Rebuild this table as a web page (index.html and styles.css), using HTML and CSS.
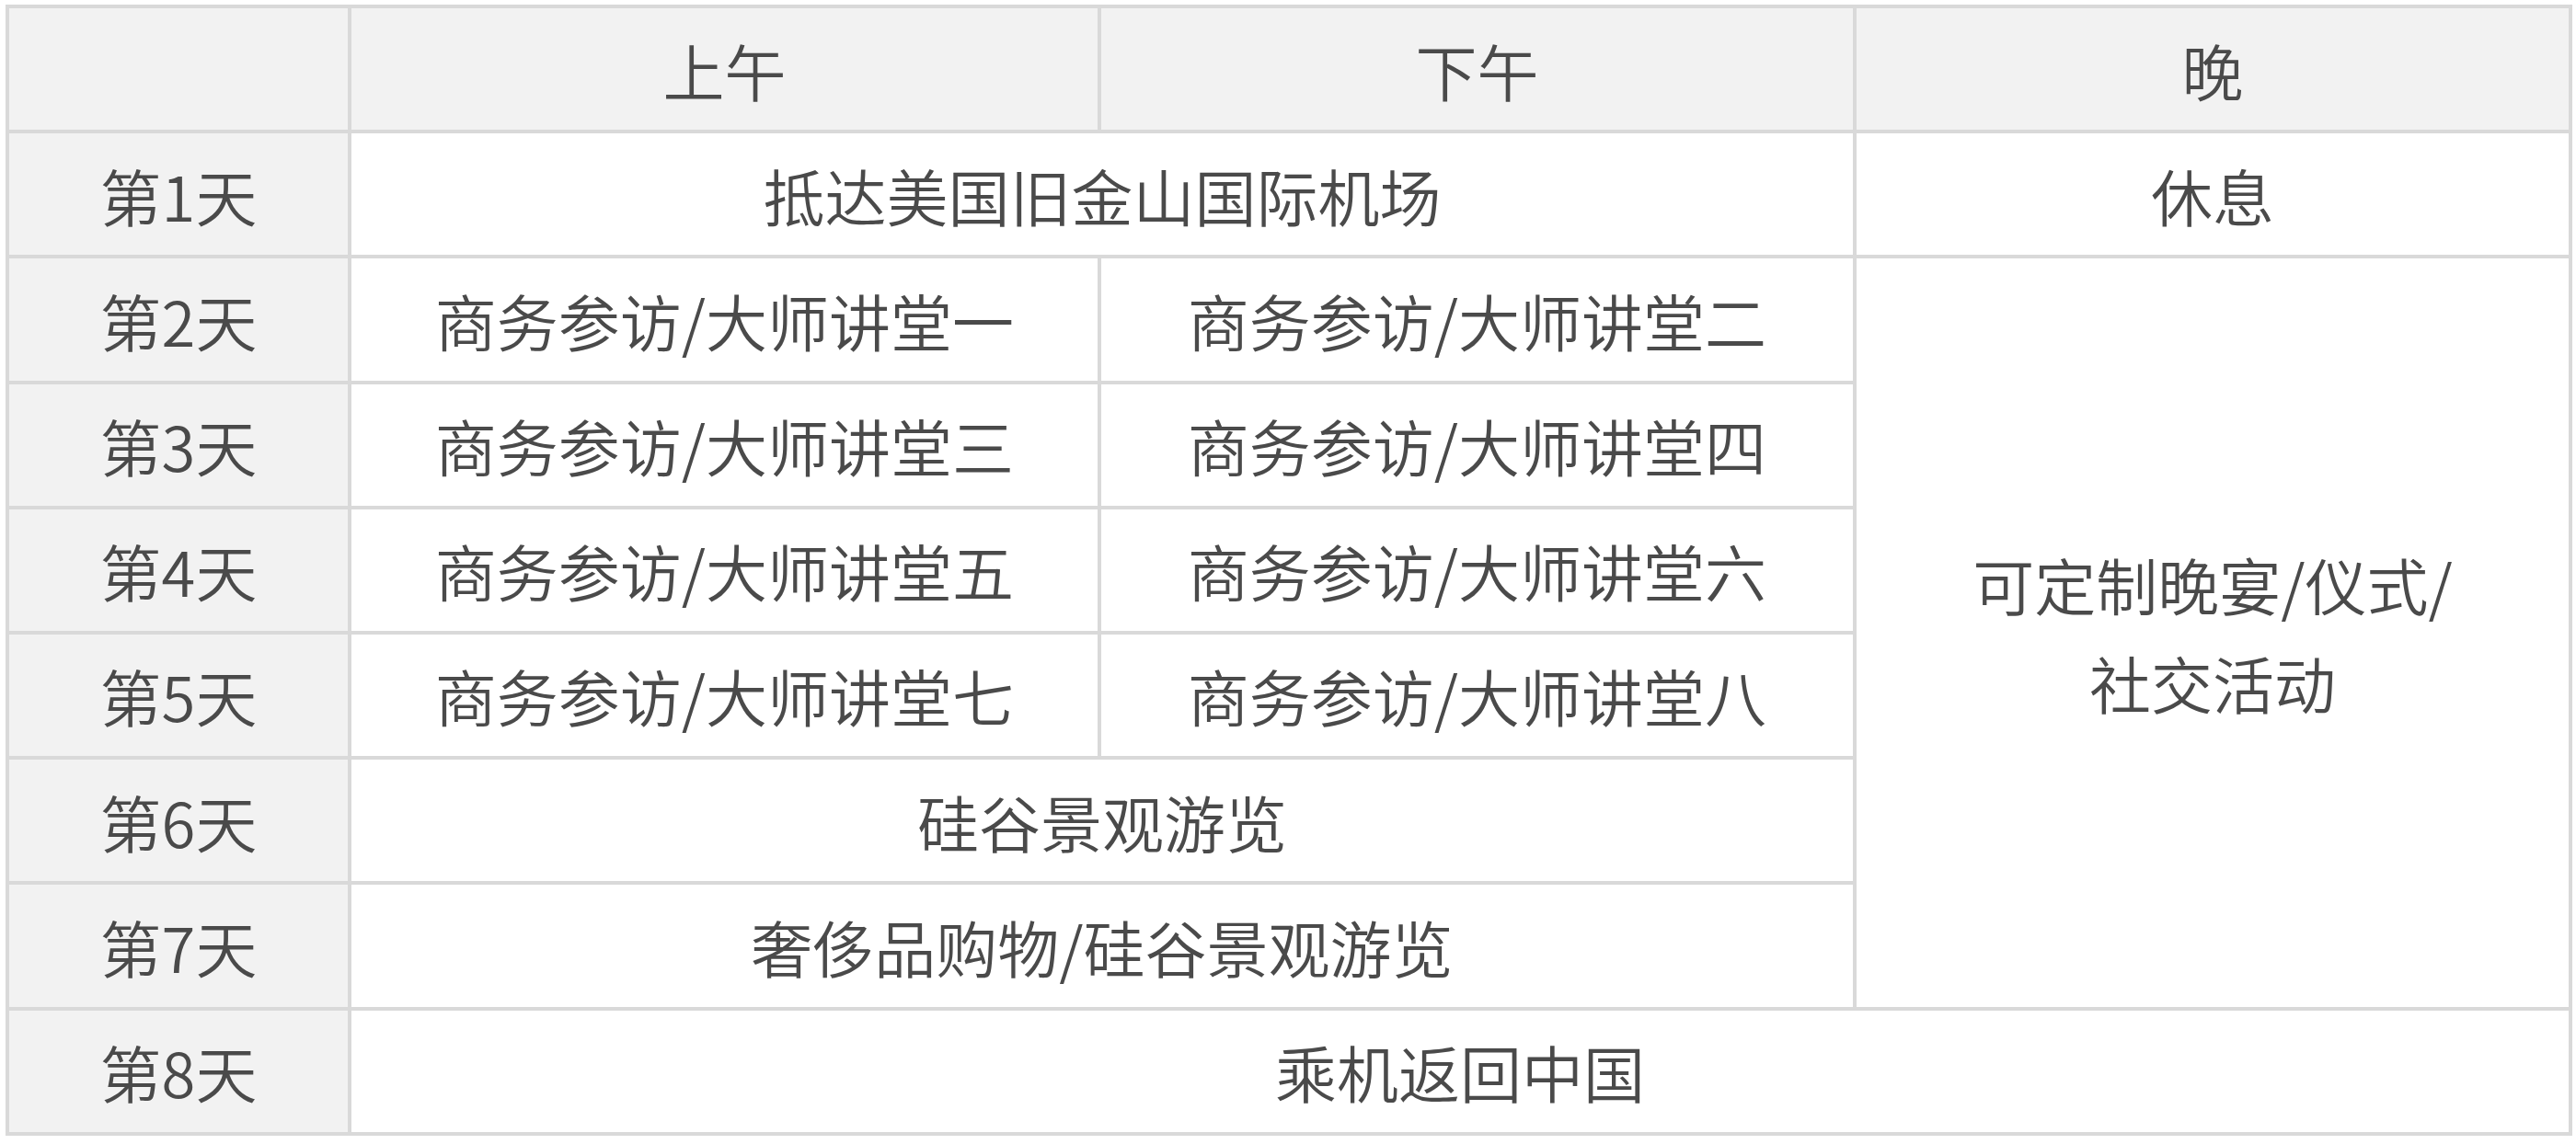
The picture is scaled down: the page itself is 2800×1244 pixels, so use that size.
FILE: index.html
```html
<!DOCTYPE html>
<html lang="zh-CN">
<head>
<meta charset="utf-8">
<title>行程安排</title>
<link rel="stylesheet" href="styles.css">
</head>
<body>
<table class="schedule">
  <colgroup>
    <col class="col-day">
    <col class="col-am">
    <col class="col-pm">
    <col class="col-eve">
  </colgroup>
  <thead>
    <tr>
      <th class="head"></th>
      <th class="head">上午</th>
      <th class="head">下午</th>
      <th class="head">晚</th>
    </tr>
  </thead>
  <tbody>
    <tr>
      <th class="day">第1天</th>
      <td colspan="2">抵达美国旧金山国际机场</td>
      <td>休息</td>
    </tr>
    <tr>
      <th class="day">第2天</th>
      <td>商务参访/大师讲堂一</td>
      <td>商务参访/大师讲堂二</td>
      <td rowspan="6" class="evening">可定制晚宴/仪式/<br>社交活动</td>
    </tr>
    <tr>
      <th class="day">第3天</th>
      <td>商务参访/大师讲堂三</td>
      <td>商务参访/大师讲堂四</td>
    </tr>
    <tr>
      <th class="day">第4天</th>
      <td>商务参访/大师讲堂五</td>
      <td>商务参访/大师讲堂六</td>
    </tr>
    <tr>
      <th class="day">第5天</th>
      <td>商务参访/大师讲堂七</td>
      <td>商务参访/大师讲堂八</td>
    </tr>
    <tr>
      <th class="day">第6天</th>
      <td colspan="2">硅谷景观游览</td>
    </tr>
    <tr>
      <th class="day">第7天</th>
      <td colspan="2">奢侈品购物/硅谷景观游览</td>
    </tr>
    <tr>
      <th class="day">第8天</th>
      <td colspan="3">乘机返回中国</td>
    </tr>
  </tbody>
</table>
</body>
</html>
```
FILE: styles.css
```css
html, body {
  margin: 0;
  padding: 0;
  background: #ffffff;
}

body {
  padding: 5px 0 0 6px;
  font-family: "Noto Sans CJK SC", "Noto Sans", sans-serif;
  color: #4a4a4a;
}

.schedule {
  border-collapse: collapse;
  table-layout: fixed;
  width: 2786px;
}

.col-day { width: 372px; }
.col-am { width: 815px; }
.col-pm { width: 821px; }
.col-eve { width: 778px; }

.schedule th,
.schedule td {
  border: 4px solid #d9d9d9;
  height: 136px;
  padding: 0;
  text-align: center;
  vertical-align: middle;
  font-size: 67px;
  font-weight: 350;
  line-height: 1.6;
  color: #4a4a4a;
  box-sizing: border-box;
}

.schedule tr {
  height: 136.2px;
}

.schedule .head,
.schedule .day {
  background: #f2f2f2;
  font-weight: 350;
}

.schedule td {
  background: #ffffff;
}
```
